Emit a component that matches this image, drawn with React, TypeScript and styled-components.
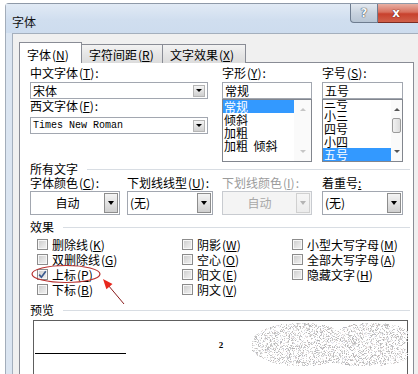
import React from 'react';
import styled, { createGlobalStyle } from 'styled-components';

const GlobalStyle = createGlobalStyle`
  html, body { margin: 0; padding: 0; background: #fff; }
  body {
    font-family: "Noto Sans CJK SC", "Liberation Sans", sans-serif;
    font-size: 12px;
    color: #000;
  }
  * { box-sizing: border-box; }
`;

const Stage = styled.div`
  position: relative;
  width: 418px;
  height: 374px;
  overflow: hidden;
  padding: 3px 0 0 5px;
`;

const Window = styled.div`
  height: 371px;
  border-top: 1px solid #8e99a8;
  border-left: 1px solid #a3adba;
  border-top-left-radius: 4px;
  background: #dbe5f1;
  display: flex;
  flex-direction: column;
`;

const TitleBar = styled.div`
  height: 29px;
  flex: none;
  display: flex;
  align-items: flex-start;
  background: linear-gradient(180deg, #e1eaf5 0%, #d0deef 55%, #cddcee 100%);
`;

const Title = styled.div`
  padding: 11px 0 0 6px;
  line-height: 14px;
  font-size: 12px;
  color: #111;
`;

const Caption = styled.div`
  margin-left: auto;
  display: flex;
`;

const HelpButton = styled.div`
  width: 28px;
  height: 19px;
  border: 1px solid #6e7c8f;
  border-top: none;
  border-bottom-left-radius: 4px;
  background: linear-gradient(180deg, #e3e9f0 0%, #c9d3df 50%, #b8c5d4 100%);
  display: flex;
  align-items: center;
  justify-content: center;
  font: bold 12px "DejaVu Sans", sans-serif;
  color: #f4f6f8;
  text-shadow: 0 0 1px #2c3440, 0 0 1px #2c3440;
`;

const CloseButton = styled.div`
  width: 40px;
  height: 19px;
  border-bottom: 1px solid #7b2b22;
  background: linear-gradient(180deg, #e8b0a4 0%, #d8705e 45%, #c8412d 55%, #d0604a 100%);
  display: flex;
  align-items: center;
  justify-content: center;
  padding-right: 4px;
  font: bold 12px "DejaVu Sans", sans-serif;
  color: #fff;
  text-shadow: 0 0 1px #5a1810, 0 0 1px #5a1810;
`;

const Body = styled.div`
  flex: 1;
  margin-left: 6px;
  border-top: 1px solid #a4afbd;
  border-left: 1px solid #a4afbd;
  background: #f0f0f0;
  padding: 8px 0 0 6px;
  display: flex;
  flex-direction: column;
`;

const TabStrip = styled.div`
  display: flex;
  align-items: flex-end;
  height: 21px;
  position: relative;
  z-index: 1;
`;

const Tab = styled.div<{ $active?: boolean; $w: number }>`
  width: ${p => p.$w}px;
  height: ${p => (p.$active ? 21 : 19)}px;
  margin-left: ${p => (p.$active ? 0 : -1)}px;
  border: 1px solid #898c95;
  border-bottom: none;
  background: ${p => (p.$active ? '#fff' : 'linear-gradient(180deg, #f3f3f3 0%, #e6e6e6 50%, #dcdcdc 100%)')};
  display: flex;
  align-items: flex-end;
  padding: 0 0 1px 7px;
  line-height: 14px;
  white-space: nowrap;
`;

const TabPage = styled.div`
  margin-top: -1px;
  width: 395px;
  flex: 1;
  background: #fff;
  border: 1px solid #898c95;
  border-bottom: none;
  padding: 3px 3px 0 10px;
  display: flex;
  flex-direction: column;
`;

const Key = styled.span`
  padding: 0 1px;
  & u { text-decoration: underline; text-underline-offset: 1px; }
`;

const Acc = ({ k }: { k: string }) => (
  <Key>(<u>{k}</u>)</Key>
);

const Grid = styled.div<{ $cols: string }>`
  display: grid;
  grid-template-columns: ${p => p.$cols};
  align-items: start;
`;

const Col = styled.div`
  display: flex;
  flex-direction: column;
  align-items: flex-start;
`;

const FieldLabel = styled.div<{ $disabled?: boolean; $mt?: number }>`
  height: 14px;
  line-height: 14px;
  margin-top: ${p => p.$mt ?? 0}px;
  white-space: nowrap;
  color: ${p => (p.$disabled ? '#9b9b9b' : '#000')};
`;

const Combo = styled.div<{ $w: number; $h: number; $mt?: number; $disabled?: boolean }>`
  width: ${p => p.$w}px;
  height: ${p => p.$h}px;
  margin-top: ${p => p.$mt ?? 0}px;
  border: 1px solid ${p => (p.$disabled ? '#c8cbd0' : '#a2a7b0')};
  background: ${p => (p.$disabled ? '#f4f4f4' : '#fff')};
  display: flex;
  align-items: center;
`;

const ComboText = styled.span<{ $center?: boolean; $mono?: boolean; $disabled?: boolean }>`
  flex: 1;
  padding-left: ${p => (p.$center ? 0 : 2)}px;
  text-align: ${p => (p.$center ? 'center' : 'left')};
  white-space: pre;
  line-height: 14px;
  color: ${p => (p.$disabled ? '#a8a8a8' : '#000')};
  font-family: ${p => (p.$mono ? '"Liberation Mono", monospace' : 'inherit')};
  font-size: ${p => (p.$mono ? '10px' : '12px')};
`;

const DropButton = styled.span<{ $tall?: boolean; $disabled?: boolean }>`
  flex: none;
  width: ${p => (p.$tall ? 14 : 12)}px;
  height: ${p => (p.$tall ? 20 : 12)}px;
  margin-right: ${p => (p.$tall ? 1 : 2)}px;
  border: 1px solid ${p => (p.$disabled ? '#d0d0d0' : p.$tall ? '#8d8d8d' : '#b5b5b5')};
  background: ${p =>
    p.$disabled
      ? 'linear-gradient(180deg, #f6f6f6, #ececec)'
      : 'linear-gradient(180deg, #f4f4f4 0%, #e2e2e2 50%, #cfcfcf 100%)'};
  display: flex;
  align-items: center;
  justify-content: center;
`;

const Triangle = styled.span<{ $tall?: boolean; $disabled?: boolean }>`
  width: 0;
  height: 0;
  border-left: ${p => (p.$tall ? 3.5 : 3)}px solid transparent;
  border-right: ${p => (p.$tall ? 3.5 : 3)}px solid transparent;
  border-top: ${p => (p.$tall ? 4 : 3)}px solid ${p => (p.$disabled ? '#b4b4b4' : '#000')};
`;

const ListBox = styled.div<{ $w: number }>`
  width: ${p => p.$w}px;
  height: 63px;
  border: 1px solid #82868e;
  background: #fff;
  display: flex;
  overflow: hidden;
`;

const ListItems = styled.div<{ $shift: number }>`
  flex: 1;
  margin-top: ${p => -p.$shift}px;
`;

const ListItem = styled.div<{ $sel?: boolean }>`
  height: 13px;
  line-height: 13px;
  padding-left: 1px;
  white-space: pre;
  background: ${p => (p.$sel ? '#3399ff' : 'transparent')};
  color: ${p => (p.$sel ? '#fff' : '#000')};
`;

const ScrollBar = styled.div<{ $w: number }>`
  flex: none;
  width: ${p => p.$w}px;
  background: #fafafa;
  display: flex;
  flex-direction: column;
  align-items: center;
  padding: 8px 0 8px;
`;

const ScrollArrow = styled.span<{ $up?: boolean; $disabled?: boolean }>`
  width: 0;
  height: 0;
  border-left: 3px solid transparent;
  border-right: 3px solid transparent;
  ${p => (p.$up ? 'border-bottom' : 'border-top')}: 3px solid ${p => (p.$disabled ? '#c6c6c6' : '#555')};
  margin-top: ${p => (p.$up ? 0 : 'auto')};
`;

const Thumb = styled.span`
  width: 9px;
  height: 15px;
  margin-top: 7px;
  border: 1px solid #9b9b9b;
  border-radius: 2px;
  background: linear-gradient(90deg, #f2f2f2, #dcdcdc);
`;

const GroupHeader = styled.div<{ $mt: number }>`
  display: flex;
  align-items: center;
  height: 14px;
  line-height: 14px;
  margin-top: ${p => p.$mt}px;
`;

const GroupRule = styled.span`
  flex: 1;
  height: 1px;
  margin-left: 9px;
  background: #d8dde3;
`;

const Effects = styled.div`
  display: grid;
  grid-template-columns: 145px 110px 1fr;
  grid-template-rows: repeat(4, 15px);
  grid-auto-flow: column;
  padding-left: 7px;
  margin-top: 3px;
`;

const CheckRow = styled.div`
  display: flex;
  align-items: center;
  gap: 4px;
  white-space: nowrap;
  line-height: 14px;
`;

const CheckBox = styled.span`
  flex: none;
  width: 11px;
  height: 11px;
  border: 1px solid #8c8c8c;
  background: linear-gradient(135deg, #c9c9c9 0%, #e4e4e4 60%, #f2f2f2 100%);
  box-shadow: inset 0 0 0 1px #f7f7f7;
  display: flex;
  align-items: center;
  justify-content: center;
`;

const Preview = styled.div`
  margin: 3px 0 0 3px;
  width: 375px;
  flex: 1;
  border: 1px solid #5e5e5e;
  border-bottom: none;
  display: flex;
  flex-direction: column;
`;

const Sup = styled.div`
  margin-top: 19px;
  text-align: center;
  font: bold 9px "Liberation Serif", serif;
  line-height: 10px;
  padding-left: 1px;
`;

const Baseline = styled.div`
  margin: 3px 0 0 1px;
  width: 91px;
  height: 1px;
  background: #000;
`;

const Overlay = styled.svg`
  position: absolute;
  left: 0;
  top: 0;
  pointer-events: none;
`;

function mulberry32(a: number) {
  return function () {
    a |= 0;
    a = (a + 0x6d2b79f5) | 0;
    let t = Math.imul(a ^ (a >>> 15), 1 | a);
    t = (t + Math.imul(t ^ (t >>> 7), 61 | t)) ^ t;
    return ((t ^ (t >>> 14)) >>> 0) / 4294967296;
  };
}

const speckles = (() => {
  const r = mulberry32(11);
  const out: { x: number; y: number; c: string }[] = [];
  for (let y = 322; y < 367; y += 1) {
    for (let x = 252; x < 408; x += 1) {
      const inside =
        ((x - 300) / 50) ** 2 + ((y - 344) / 22) ** 2 < 1 ||
        ((x - 372) / 38) ** 2 + ((y - 336) / 14) ** 2 < 1 ||
        ((x - 365) / 45) ** 2 + ((y - 354) / 12) ** 2 < 1;
      if (!inside) continue;
      if (r() < 0.42) {
        const g = Math.floor(178 + r() * 66);
        const tint = r();
        const rr = tint < 0.12 ? g + 10 : g;
        const bb = tint > 0.88 ? g + 10 : g;
        out.push({ x, y, c: `rgb(${Math.min(rr, 255)},${g},${Math.min(bb, 255)})` });
      }
    }
  }
  return out;
})();

const fontStyles = ['常规', '倾斜', '加粗', '加粗  倾斜'];
const sizes = ['三号', '小三', '四号', '小四', '五号'];

const effectItems: { label: string; k: string; checked?: boolean }[] = [
  { label: '删除线', k: 'K' },
  { label: '双删除线', k: 'G' },
  { label: '上标', k: 'P', checked: true },
  { label: '下标', k: 'B' },
  { label: '阴影', k: 'W' },
  { label: '空心', k: 'O' },
  { label: '阳文', k: 'E' },
  { label: '阴文', k: 'V' },
  { label: '小型大写字母', k: 'M' },
  { label: '全部大写字母', k: 'A' },
  { label: '隐藏文字', k: 'H' },
];

const Check = () => (
  <svg width="9" height="9" viewBox="0 0 9 9">
    <path d="M1.2 4.6 L3.4 7.2 L7.8 1.2" fill="none" stroke="#3b5a8e" strokeWidth="1.7" />
  </svg>
);

export default function App() {
  return (
    <>
      <GlobalStyle />
      <Stage>
        <Window>
          <TitleBar>
            <Title>字体</Title>
            <Caption>
              <HelpButton>?</HelpButton>
              <CloseButton>x</CloseButton>
            </Caption>
          </TitleBar>
          <Body>
            <TabStrip>
              <Tab $active $w={63}>字体<Acc k="N" /></Tab>
              <Tab $w={82}>字符间距<Acc k="R" /></Tab>
              <Tab $w={84}>文字效果<Acc k="X" /></Tab>
            </TabStrip>
            <TabPage>
              <Grid $cols="192px 100px 81px">
                <Col>
                  <FieldLabel>中文字体<Acc k="T" />:</FieldLabel>
                  <Combo $w={178} $h={17} $mt={2}>
                    <ComboText>宋体</ComboText>
                    <DropButton><Triangle /></DropButton>
                  </Combo>
                  <FieldLabel $mt={0}>西文字体<Acc k="F" />:</FieldLabel>
                  <Combo $w={178} $h={17} $mt={4}>
                    <ComboText $mono>Times New Roman</ComboText>
                    <DropButton><Triangle /></DropButton>
                  </Combo>
                </Col>
                <Col>
                  <FieldLabel>字形<Acc k="Y" />:</FieldLabel>
                  <Combo $w={90} $h={17} $mt={2}>
                    <ComboText>常规</ComboText>
                  </Combo>
                  <ListBox $w={90}>
                    <ListItems $shift={0}>
                      {fontStyles.map((s, i) => (
                        <ListItem key={s} $sel={i === 0}>{s}</ListItem>
                      ))}
                    </ListItems>
                    <ScrollBar $w={17}>
                      <ScrollArrow $up $disabled />
                      <ScrollArrow $disabled />
                    </ScrollBar>
                  </ListBox>
                </Col>
                <Col>
                  <FieldLabel>字号<Acc k="S" />:</FieldLabel>
                  <Combo $w={81} $h={17} $mt={2}>
                    <ComboText>五号</ComboText>
                  </Combo>
                  <ListBox $w={81}>
                    <ListItems $shift={4}>
                      {sizes.map((s, i) => (
                        <ListItem key={s} $sel={i === sizes.length - 1}>{s}</ListItem>
                      ))}
                    </ListItems>
                    <ScrollBar $w={11}>
                      <ScrollArrow $up />
                      <Thumb />
                      <ScrollArrow />
                    </ScrollBar>
                  </ListBox>
                </Col>
              </Grid>

              <GroupHeader $mt={0}>所有文字<GroupRule /></GroupHeader>
              <Grid $cols="97px 95px 100px 81px">
                <Col>
                  <FieldLabel>字体颜色<Acc k="C" />:</FieldLabel>
                  <Combo $w={90} $h={24} $mt={1}>
                    <ComboText $center>自动</ComboText>
                    <DropButton $tall><Triangle $tall /></DropButton>
                  </Combo>
                </Col>
                <Col>
                  <FieldLabel>下划线线型<Acc k="U" />:</FieldLabel>
                  <Combo $w={86} $h={24} $mt={1}>
                    <ComboText>(无)</ComboText>
                    <DropButton $tall><Triangle $tall /></DropButton>
                  </Combo>
                </Col>
                <Col>
                  <FieldLabel $disabled>下划线颜色<Acc k="I" />:</FieldLabel>
                  <Combo $w={90} $h={24} $mt={1} $disabled>
                    <ComboText $center $disabled>自动</ComboText>
                    <DropButton $tall $disabled><Triangle $tall $disabled /></DropButton>
                  </Combo>
                </Col>
                <Col>
                  <FieldLabel>着重号<u>:</u></FieldLabel>
                  <Combo $w={81} $h={24} $mt={1}>
                    <ComboText>(无)</ComboText>
                    <DropButton $tall><Triangle $tall /></DropButton>
                  </Combo>
                </Col>
              </Grid>

              <GroupHeader $mt={5}>效果<GroupRule /></GroupHeader>
              <Effects>
                {effectItems.map(e => (
                  <CheckRow key={e.label}>
                    <CheckBox>{e.checked && <Check />}</CheckBox>
                    <span>{e.label}<Acc k={e.k} /></span>
                  </CheckRow>
                ))}
              </Effects>

              <GroupHeader $mt={6}>预览<GroupRule /></GroupHeader>
              <Preview>
                <Sup>2</Sup>
                <Baseline />
              </Preview>
            </TabPage>
          </Body>
        </Window>

        <Overlay width="418" height="374" viewBox="0 0 418 374">
          {speckles.map((s, i) => (
            <rect key={i} x={s.x} y={s.y} width="1" height="1" fill={s.c} />
          ))}
          <ellipse cx="66" cy="274" rx="34" ry="8.5" fill="none" stroke="#b8312f" strokeWidth="1.2" />
          <line x1="124" y1="304" x2="108" y2="285" stroke="#8a1c1c" strokeWidth="1" />
          <polygon points="103,279 112.5,284.1 106.4,289.3" fill="#e8281e" />
        </Overlay>
      </Stage>
    </>
  );
}
